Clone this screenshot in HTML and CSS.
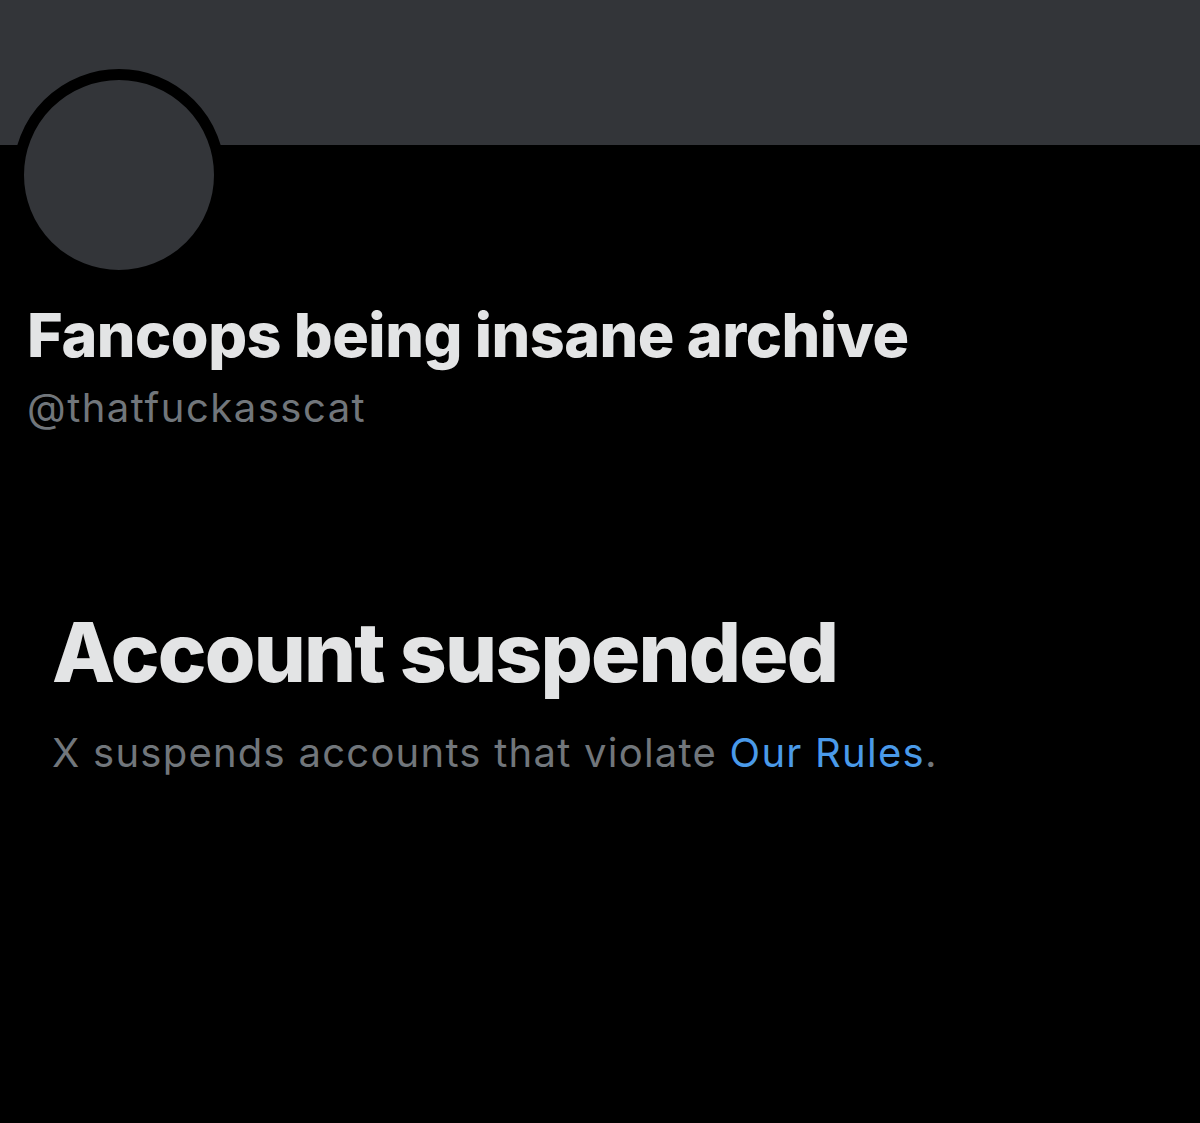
FILE: index.html
```html
<!DOCTYPE html>
<html>
<head>
<meta charset="utf-8">
<link rel="stylesheet" href="styles.css">
</head>
<body>
<div class="page">
  <div class="banner"></div>
  <div class="profile">
    <div class="avatar"></div>
    <h1 class="name">Fancops being insane archive</h1>
    <div class="handle">@thatfuckasscat</div>
  </div>
  <div class="notice">
    <h2 class="title">Account suspended</h2>
    <p class="desc">X suspends accounts that violate <a href="#" class="link">Our Rules</a>.</p>
  </div>
</div>
</body>
</html>
```

FILE: styles.css
```css
html, body {
  margin: 0;
  padding: 0;
  background: #000;
}
.page {
  width: 1200px;
  height: 1123px;
  background: #000;
  overflow: hidden;
  font-family: Inter, "Noto Sans", sans-serif;
}
.banner {
  height: 145px;
  background: #333539;
}
.profile {
  padding-left: 27px;
}
.avatar {
  width: 190px;
  height: 190px;
  border-radius: 50%;
  background: #333539;
  border: 11px solid #000;
  margin-top: -76px;
  margin-left: -14px;
}
.name {
  margin: 19px 0 0;
  font-size: 61px;
  font-weight: 800;
  letter-spacing: -0.5px;
  line-height: 70px;
  color: #e3e4e5;
}
.handle {
  margin-top: 10px;
  font-size: 40px;
  letter-spacing: 1.5px;
  line-height: 56px;
  color: #71767b;
}
.notice {
  padding-left: 52px;
  margin-top: 169px;
}
.title {
  margin: 0;
  font-size: 82px;
  font-weight: 800;
  letter-spacing: -1.8px;
  line-height: 96px;
  color: #e3e4e5;
}
.desc {
  margin: 26px 0 0;
  font-size: 40px;
  letter-spacing: 1.25px;
  line-height: 52px;
  color: #71767b;
}
.link {
  color: #4a9ae9;
  text-decoration: none;
}
```
